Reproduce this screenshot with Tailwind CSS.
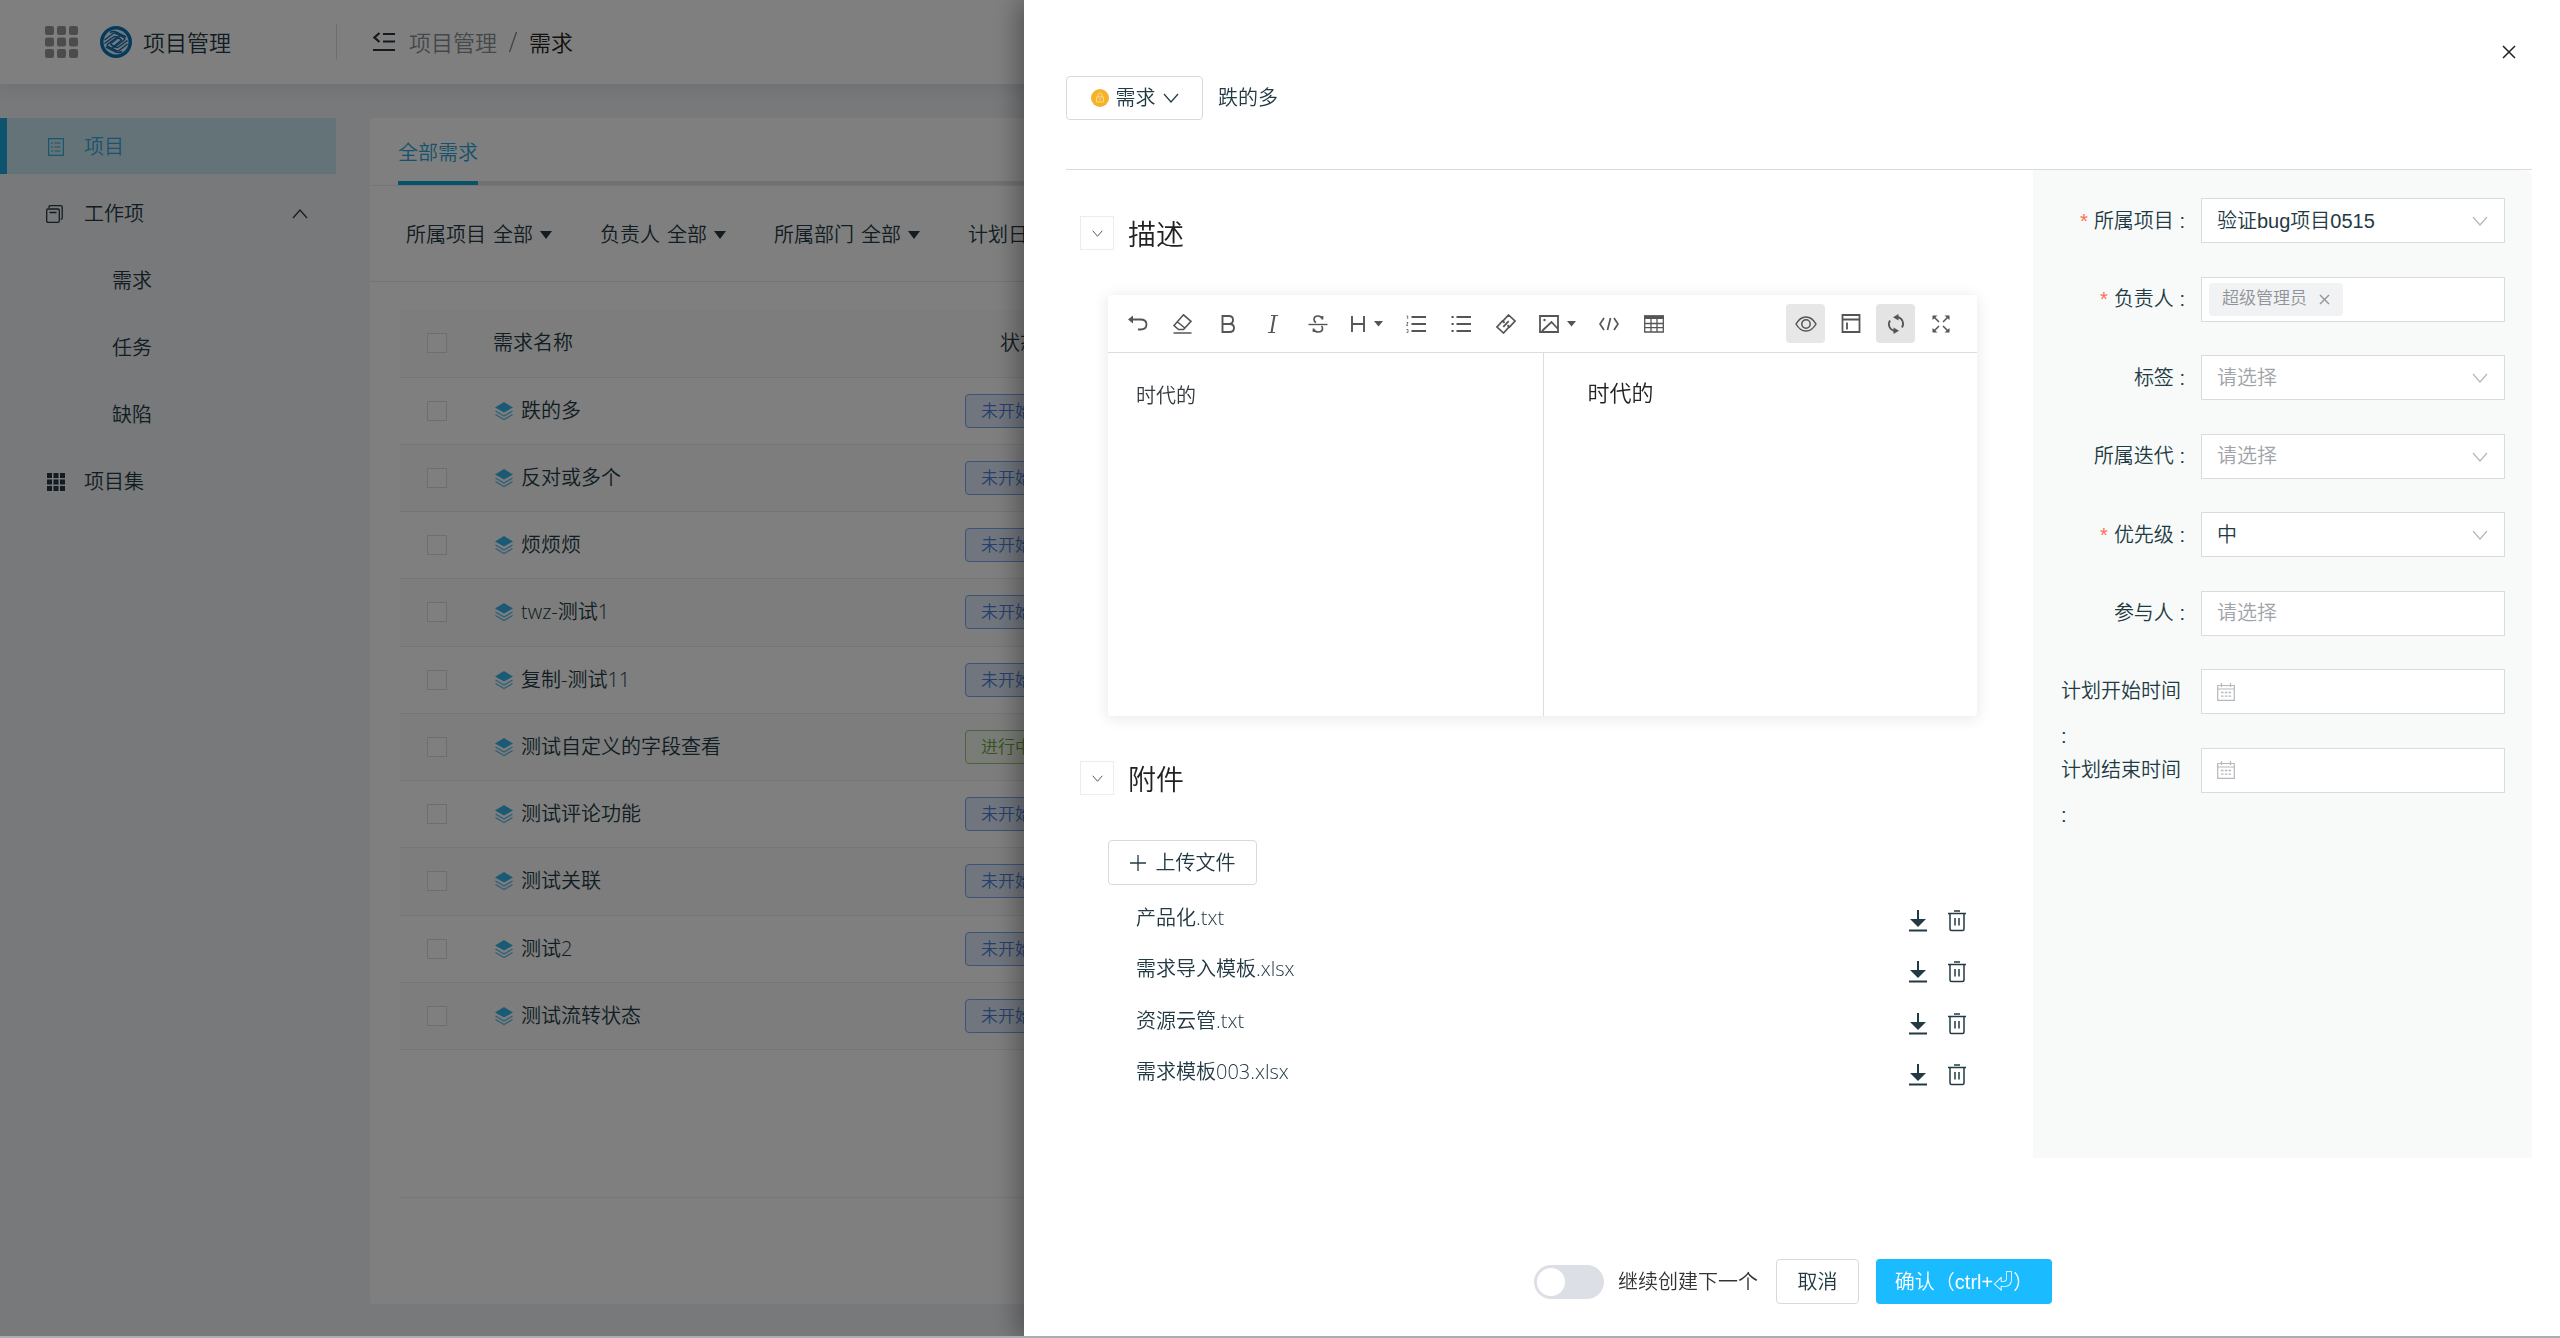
<!DOCTYPE html>
<html lang="zh-CN">
<head>
<meta charset="utf-8">
<meta name="viewport" content="width=device-width, initial-scale=1">
<title>项目管理 - 需求</title>
<script src="https://cdn.jsdelivr.net/npm/@tailwindcss/browser@4"></script>
</head>
<body class="bg-[#f0f2f5] font-['Open_Sans','Noto_Sans_CJK_SC',sans-serif] text-xl leading-7 font-[350] text-[#223a44]">

<svg class="hidden" aria-hidden="true">
  <symbol id="i-down" viewBox="0 0 16 16"><path d="M1 4l7 8 7-8" fill="none" stroke="currentColor" stroke-width="1.2"/></symbol>
  <symbol id="i-caret" viewBox="0 0 12 10"><path d="M0 1h12L6 9z" fill="currentColor"/></symbol>
  <symbol id="i-layers" viewBox="0 0 18 20"><path d="M9 1l9 5.500-9 5L0 6.500z" fill="#35b5ea"/><path d="M.5 10l8.500 5 8.500-5M.5 13.500l8.500 5 8.500-5" fill="none" stroke="#58bdea" stroke-width="1.300"/></symbol>
  <symbol id="i-download" viewBox="0 0 20 22"><path d="M10 0v10M1 20.500h18" stroke="currentColor" stroke-width="2" fill="none"/><path d="M2 9h16l-8 8z" fill="currentColor"/></symbol>
  <symbol id="i-trash" viewBox="0 0 20 22"><path d="M1 3.500h18M7 1h6M3 4v15q0 1.500 1.500 1.500h11q1.500 0 1.500-1.500V4M8 8v7.500M12 8v7.500" fill="none" stroke="currentColor" stroke-width="1.500"/></symbol>
  <symbol id="i-cal" viewBox="0 0 18 18"><path d="M.7 2.500h16.600v14.800H.7zM.7 6h16.600M4.500 0v4M13.500 0v4" fill="none" stroke="currentColor" stroke-width="1.200"/><path d="M4 9.500h2.500M7.800 9.500h2.500M11.500 9.500h2.500M4 13.200h2.500M7.800 13.200h2.500M11.500 13.200h2.500" stroke="currentColor" stroke-width="1.300"/></symbol>
</svg>

<div class="flex min-h-screen flex-col">
  <header class="relative flex h-21 items-center bg-white shadow-[0_4px_16px_rgba(0,21,41,0.08)]">
    <div class="flex w-84 items-center pl-[45px]">
      <svg class="h-8 w-[33px]" viewBox="0 0 33 32" fill="#999"><rect width="9" height="9" rx="2"/><rect x="12" width="9" height="9" rx="2"/><rect x="24" width="9" height="9" rx="2"/><rect y="11.500" width="9" height="9" rx="2"/><rect x="12" y="11.500" width="9" height="9" rx="2"/><rect x="24" y="11.500" width="9" height="9" rx="2"/><rect y="23" width="9" height="9" rx="2"/><rect x="12" y="23" width="9" height="9" rx="2"/><rect x="24" y="23" width="9" height="9" rx="2"/></svg>
      <svg class="ml-[22px] size-8" viewBox="0 0 32 32"><circle cx="16" cy="16" r="16" fill="#0b75b8"/><circle cx="16" cy="16" r="12.500" fill="#e4f0fa"/><g fill="none" stroke="#0f6fb4" stroke-width="1.500" stroke-linejoin="round"><path d="M4.500 14L13 7.500q1.500-1 3 0l8 4q1.500 1 0 2.500L14 21.500"/><path d="M4.500 17.500L13.500 11q1.500-1 3 0l4 2q1.500 1 0 2L12 22"/><path d="M10 6.500q3-1.500 6-.5l10 5"/><path d="M27.500 18L19 24.500q-1.500 1-3 0l-8-4q-1.500-1 0-2.500L18 10.500"/><path d="M27.500 14.500L18.500 21q-1.500 1-3 0l-4-2q-1.500-1 0-2L20 10"/><path d="M22 25.500q-3 1.500-6 .5l-10-5"/></g></svg>
      <h1 class="ml-[11px] text-[22px] font-[350]">项目管理</h1>
    </div>
    <div class="h-9 w-px bg-[#dcdcdc]"></div>
    <nav class="flex items-center pl-9 text-[22px]" aria-label="面包屑">
      <button type="button" aria-label="收起菜单"><svg class="h-5 w-[22px]" viewBox="0 0 22 20" fill="none" stroke="#28343c" stroke-width="2.200"><path d="M6.500 1L1.500 5.500l5 4.500M10 2h12M10 9.500h12M0 18h22"/></svg></button>
      <a href="#" class="ml-[14px] text-[#8a9196]">项目管理</a>
      <svg class="mx-3 h-5 w-2" viewBox="0 0 8 20"><path d="M7.500 0L.5 20" stroke="#8a9196" stroke-width="1.500"/></svg>
      <span class="text-[#222]">需求</span>
    </nav>
  </header>

  <div class="flex flex-1 pt-[34px] pb-[34px]">
    <aside class="w-84 shrink-0">
      <ul class="flex flex-col gap-[11px]">
        <li><a href="#" class="flex h-14 items-center border-l-[7px] border-[#1ba7dc] bg-[#c8e6f1] pt-[2px] pl-[41px] text-[#35a8de]">
          <svg class="h-[18px] w-4" viewBox="0 0 16 18" fill="none" stroke="currentColor" stroke-width="1.200"><path d="M.6.6h14.800v16.800H.6zM3 5h2M6.500 5h6M3 9h2M6.500 9h6M3 13h2M6.500 13h6"/></svg>
          <span class="ml-5">项目</span></a></li>
        <li><a href="#" class="flex h-14 items-center pt-[2px] pr-7 pl-[46px]">
          <svg class="h-[18px] w-[17px]" viewBox="0 0 17 18" fill="none" stroke="currentColor" stroke-width="1.300"><path d="M3 3V2q0-1.300 1.300-1.300h10.400Q16.200.7 16.200 2v11q0 1.300-1.500 1.300M2 4h10q1.300 0 1.300 1.300V16q0 1.300-1.300 1.300H2Q.7 17.300.7 16V5.300Q.7 4 2 4zM3.500 7.500h7"/></svg>
          <span class="ml-[21px]">工作项</span>
          <svg class="ml-auto size-4 rotate-180"><use href="#i-down"/></svg></a></li>
        <li><a href="#" class="flex h-14 items-center pt-[2px] pl-28">需求</a></li>
        <li><a href="#" class="flex h-14 items-center pt-[2px] pl-28">任务</a></li>
        <li><a href="#" class="flex h-14 items-center pt-[2px] pl-28">缺陷</a></li>
        <li><a href="#" class="flex h-14 items-center pt-[2px] pl-[47px]">
          <svg class="h-[18px] w-[18px]" viewBox="0 0 18 18" fill="currentColor"><path d="M0 0h5v5H0zM6.500 0h5v5h-5zM13 0h5v5h-5zM0 6.500h5v5H0zM6.500 6.500h5v5h-5zM13 6.500h5v5h-5zM0 13h5v5H0zM6.500 13h5v5h-5zM13 13h5v5h-5z"/></svg>
          <span class="ml-[19px]">项目集</span></a></li>
      </ul>
    </aside>

    <main class="mr-8 ml-[34px] flex-1 rounded bg-white">
      <div class="flex h-[68px] items-stretch border-b border-[#eaeaea] pl-7">
        <a href="#" class="flex items-center border-b-4 border-[#12a4d0] pt-[6px] text-[#2ba5d8]">全部需求</a>
        <div class="flex-1 border-b-4 border-[#e2e2e2]"></div>
      </div>
      <div class="flex h-24 items-center gap-12 border-b border-[#e8e8e8] pt-[2px] pl-9">
        <button type="button" class="flex shrink-0 items-center gap-[7px]"><span>所属项目</span><span>全部</span><svg class="h-[10px] w-3"><use href="#i-caret"/></svg></button>
        <button type="button" class="flex shrink-0 items-center gap-[7px]"><span>负责人</span><span>全部</span><svg class="h-[10px] w-3"><use href="#i-caret"/></svg></button>
        <button type="button" class="flex shrink-0 items-center gap-[7px]"><span>所属部门</span><span>全部</span><svg class="h-[10px] w-3"><use href="#i-caret"/></svg></button>
        <button type="button" class="flex shrink-0 items-center gap-[7px]"><span>计划日期</span><span>全部</span><svg class="h-[10px] w-3"><use href="#i-caret"/></svg></button>
      </div>
      <div class="mr-8 ml-[30px] mt-7 border-b border-[#f0f0f0] pb-[147px]">
        <table class="h-[740px] w-full table-fixed border-collapse text-left">
          <thead>
            <tr class="h-[67px] border-b border-[#ebebeb] bg-[#fafafa]">
              <th class="w-[65px] pl-[27px]"><input type="checkbox" aria-label="全选" class="block size-5 appearance-none border border-[#dcdcdc] bg-white"></th>
              <th class="w-[500px] pl-7 font-[350]">需求名称</th>
              <th class="pl-[35px] font-[350]">状态</th>
            </tr>
          </thead>
          <tbody id="rows"></tbody>
        </table>
      </div>
    </main>
  </div>
</div>

<div class="fixed inset-0 bg-black/50"></div>

<section role="dialog" aria-label="创建需求" class="fixed inset-y-0 right-0 flex w-3/5 flex-col bg-white pr-7 pl-[42px] shadow-[-6px_0_24px_rgba(0,0,0,0.35)]">
  <button type="button" aria-label="关闭" class="absolute top-[44px] right-[43px] size-4 text-[#222]"><svg class="size-4" viewBox="0 0 16 16"><path d="M2 2l12 12M14 2L2 14" stroke="currentColor" stroke-width="1.500"/></svg></button>

  <div class="flex items-center border-b border-[#d9dcdd] pt-19 pb-[49px]">
    <button type="button" class="flex h-11 w-[137px] items-center justify-center gap-[7px] rounded border border-[#d9d9d9]">
      <svg class="size-[18px]" viewBox="0 0 18 18"><circle cx="9" cy="9" r="9" fill="#f5b32c"/><path d="M5.500 13V8h7v5zM7 8V6q0-2 2-2t2 2v2M9 9.500v2" fill="none" stroke="#fbd98c" stroke-width="1"/></svg>
      需求<svg class="size-4"><use href="#i-down"/></svg>
    </button>
    <span class="ml-[15px]">跌的多</span>
  </div>

  <div class="flex flex-1">
    <div class="flex-1 pt-[45px] pr-14 pl-[14px]">
      <div class="flex items-center gap-[14px]">
        <button type="button" aria-label="折叠描述" class="flex size-[34px] items-center justify-center border border-[#ececec]"><svg class="size-[11px]"><use href="#i-down"/></svg></button>
        <h2 class="pt-[2px] text-[28px] leading-[34px] font-[350] text-[#222]">描述</h2>
      </div>

      <div class="mt-11 ml-7 rounded shadow-[0_2px_14px_2px_rgba(0,0,0,0.08)]">
        <div class="flex h-[58px] items-center gap-[6px] border-b border-[#ddd] pr-[17px] pl-[10px] text-[#555]">
          <button type="button" aria-label="撤销" class="flex h-10 w-[39px] items-center justify-center"><svg class="size-5" viewBox="0 0 20 20"><path d="M2 5.500h10.500q6 0 6 5t-6 5H10" fill="none" stroke="currentColor" stroke-width="1.800"/><path d="M0 5.500L5 1.500v8z" fill="currentColor"/></svg></button>
          <button type="button" aria-label="清除" class="flex h-10 w-[39px] items-center justify-center"><svg class="size-5" viewBox="0 0 20 20"><path d="M.5 19h18M5.500 15.500L1 11.500 10.500.8l7.500 6.500L10.500 15.500zM4.500 8l8 6.500" fill="none" stroke="currentColor" stroke-width="1.600"/></svg></button>
          <button type="button" aria-label="粗体" class="flex h-10 w-[39px] items-center justify-center"><svg class="size-5" viewBox="0 0 20 20"><path d="M4.500 2h6.500q4 0 4 4t-4 4H4.500zM4.500 10h7q4.500 0 4.500 4t-4.500 4h-7z" fill="none" stroke="currentColor" stroke-width="1.900"/></svg></button>
          <button type="button" aria-label="斜体" class="flex h-10 w-[39px] items-center justify-center"><svg class="size-5" viewBox="0 0 20 20"><path d="M8 1.500h7M5 18.500h7" stroke="currentColor" stroke-width="1.200"/><path d="M11.500 1.500l-3 17" stroke="currentColor" stroke-width="2"/></svg></button>
          <button type="button" aria-label="删除线" class="flex h-10 w-[39px] items-center justify-center"><svg class="size-5" viewBox="0 0 20 20" fill="none" stroke="currentColor"><path d="M.5 10.500h19" stroke-width="1.400"/><path d="M14.500 5.500V2M14.500 5q-1.500-3-4.500-3-4 0-4 3.500 0 2 2 3M5.500 14.500V18M5.500 15q1.500 3 4.500 3 4.500 0 4.500-3.500 0-1.500-1-2.500" stroke-width="1.700"/></svg></button>
          <button type="button" aria-label="标题" class="flex h-10 w-[47px] items-center justify-center gap-2"><svg class="h-5 w-4" viewBox="0 0 16 20"><path d="M2 2v16M14 2v16M2 10h12" stroke="currentColor" stroke-width="1.900"/></svg><svg class="h-[6px] w-[9px]" viewBox="0 0 9 6"><path d="M0 0h9L4.500 5.500z" fill="currentColor"/></svg></button>
          <button type="button" aria-label="有序列表" class="flex h-10 w-[39px] items-center justify-center"><svg class="size-5" viewBox="0 0 20 20"><path d="M5.500 3H20M5.500 10H20M5.500 17H20" stroke="currentColor" stroke-width="1.900"/><path d="M.5 2h1.200v3M.5 8.500h1.500L.5 11.500H2M.5 15.500h1.500v3H.5" fill="none" stroke="currentColor" stroke-width=".8"/></svg></button>
          <button type="button" aria-label="无序列表" class="flex h-10 w-[39px] items-center justify-center"><svg class="size-5" viewBox="0 0 20 20"><path d="M5.500 3H20M5.500 10H20M5.500 17H20M.5 3h2.200M.5 10h2.200M.5 17h2.200" stroke="currentColor" stroke-width="1.900"/></svg></button>
          <button type="button" aria-label="链接" class="flex h-10 w-[39px] items-center justify-center"><svg class="size-5" viewBox="0 0 20 20"><path d="M8.500 8.500L7 7l5.500-6L19 7l-5.500 6-2-1.800M11.500 11.500L13 13l-5.500 6L1 13l5.500-6 2 1.800M7.300 12.800l5.400-5.600" fill="none" stroke="currentColor" stroke-width="1.700"/></svg></button>
          <button type="button" aria-label="图片" class="flex h-10 w-[52px] items-center justify-center gap-2"><svg class="h-[18px] w-5" viewBox="0 0 20 18"><path d="M1 1h18v16H1zM3 16l9.500-9 6.500 7" fill="none" stroke="currentColor" stroke-width="1.800"/><circle cx="5.500" cy="5" r="1.200" fill="currentColor"/></svg><svg class="h-[6px] w-[9px]" viewBox="0 0 9 6"><path d="M0 0h9L4.500 5.500z" fill="currentColor"/></svg></button>
          <button type="button" aria-label="代码" class="flex h-10 w-[39px] items-center justify-center"><svg class="size-5" viewBox="0 0 20 20"><path d="M5 4L1 10l4 6M15 4l4 6-4 6M11.500 4l-3 12" fill="none" stroke="currentColor" stroke-width="1.700"/></svg></button>
          <button type="button" aria-label="表格" class="flex h-10 w-[39px] items-center justify-center"><svg class="size-5" viewBox="0 0 20 20"><path d="M.7 2h18.600v16H.7zM.7 9.500h18.600M.7 13.700h18.600M7 5v13M13 5v13" fill="none" stroke="currentColor" stroke-width="1.300"/><path d="M0 1.500h20V5H0z" fill="currentColor"/></svg></button>
          <div class="flex-1"></div>
          <button type="button" aria-label="预览" class="flex h-[39px] w-[39px] items-center justify-center rounded bg-[#e7e7e7]"><svg class="h-4 w-[22px]" viewBox="0 0 22 16" fill="none" stroke="currentColor" stroke-width="1.500"><path d="M1 8q4-7 10-7t10 7q-4 7-10 7T1 8z"/><circle cx="11" cy="8" r="4.200"/></svg></button>
          <button type="button" aria-label="目录" class="flex h-[39px] w-[39px] items-center justify-center"><svg class="h-[19px] w-5" viewBox="0 0 20 19" fill="none" stroke="currentColor" stroke-width="1.800"><path d="M1.500 1h17v17h-17zM1.500 5.500h17M6 8.500v7"/></svg></button>
          <button type="button" aria-label="同步滚动" class="flex h-[39px] w-[39px] items-center justify-center rounded bg-[#e4e4e4]"><svg class="size-5" viewBox="0 0 20 20"><path d="M9 17q-4-.5-5.500-4T4 6.500M11 3q4 .5 5.500 4T16 13.500" fill="none" stroke="currentColor" stroke-width="1.800"/><path d="M12.500 0v6.500L7 3.200zM7.500 20v-6.500l5.500 3.300z" fill="currentColor"/></svg></button>
          <button type="button" aria-label="全屏" class="flex h-[39px] w-[39px] items-center justify-center"><svg class="size-[18px]" viewBox="0 0 18 18"><path d="M2 2l5 5M16 2l-5 5M2 16l5-5M16 16l-5-5" stroke="currentColor" stroke-width="1.500"/><path d="M.5.5H5.500l-5 4.500zM17.500.5H12.500l5 4.500zM.5 17.500H5.500l-5-4.500zM17.500 17.500H12.500l5-4.500z" fill="currentColor"/></svg></button>
        </div>
        <div class="grid h-[363px] grid-cols-2">
          <textarea aria-label="描述内容" class="resize-none py-[29px] pl-7 text-xl leading-7 text-[#333b40] outline-none">时代的</textarea>
          <div class="border-l border-[#ddd] pt-[25px] pl-11 text-[22px] text-[#222]">时代的</div>
        </div>
      </div>

      <div class="mt-11 flex items-center gap-[14px]">
        <button type="button" aria-label="折叠附件" class="flex size-[34px] items-center justify-center border border-[#ececec]"><svg class="size-[11px]"><use href="#i-down"/></svg></button>
        <h2 class="pt-[2px] text-[28px] leading-[34px] font-[350] text-[#222]">附件</h2>
      </div>
      <button type="button" class="mt-11 ml-7 flex h-[45px] w-[149px] items-center justify-center gap-[10px] rounded border border-[#d9d9d9]"><svg class="size-4" viewBox="0 0 16 16"><path d="M8 0v16M0 8h16" stroke="currentColor" stroke-width="1.300"/></svg>上传文件</button>
      <ul id="files" class="mt-[7px] grid h-[206px] grid-rows-4 pr-[10px] pl-14"></ul>
    </div>

    <form class="w-[499px] shrink-0 rounded-tr-lg bg-[#f8faf9] pt-7 pr-[27px] pl-7 font-['Liberation_Sans','Noto_Sans_CJK_SC',sans-serif]">
      <div class="flex h-[595px] flex-col justify-between">
        <div class="flex h-[45px] items-center">
          <label for="f1" class="flex flex-1 items-center justify-end gap-[6px] pr-4"><span class="text-[#ff6a55]">*</span><span>所属项目 :</span></label>
          <div class="relative w-[304px]"><select id="f1" class="h-[45px] w-full appearance-none border border-[#d9dcdd] bg-white px-[15px] outline-none"><option>验证bug项目0515</option></select><svg class="pointer-events-none absolute top-[15px] right-[17px] size-4 text-[#b4b8bd]"><use href="#i-down"/></svg></div>
        </div>
        <div class="flex h-[45px] items-center">
          <label for="f2" class="flex flex-1 items-center justify-end gap-[6px] pr-4"><span class="text-[#ff6a55]">*</span><span>负责人 :</span></label>
          <div class="flex h-[45px] w-[304px] items-center border border-[#d9dcdd] bg-white pl-[7px]">
            <span class="flex h-[33px] w-[134px] items-center justify-center gap-3 rounded bg-[#f0f2f4] text-[17px] text-[#909399]">超级管理员<button type="button" aria-label="移除"><svg class="size-[11px]" viewBox="0 0 11 11"><path d="M1 1l9 9M10 1l-9 9" stroke="currentColor" stroke-width="1.400"/></svg></button></span>
            <input id="f2" class="min-w-0 flex-1 outline-none">
          </div>
        </div>
        <div class="flex h-[45px] items-center">
          <label for="f3" class="flex-1 pr-4 text-right">标签 :</label>
          <div class="relative w-[304px]"><select id="f3" class="h-[45px] w-full appearance-none border border-[#d9dcdd] bg-white px-[15px] text-[#a0a4a9] outline-none"><option>请选择</option></select><svg class="pointer-events-none absolute top-[15px] right-[17px] size-4 text-[#b4b8bd]"><use href="#i-down"/></svg></div>
        </div>
        <div class="flex h-[45px] items-center">
          <label for="f4" class="flex-1 pr-4 text-right">所属迭代 :</label>
          <div class="relative w-[304px]"><select id="f4" class="h-[45px] w-full appearance-none border border-[#d9dcdd] bg-white px-[15px] text-[#a0a4a9] outline-none"><option>请选择</option></select><svg class="pointer-events-none absolute top-[15px] right-[17px] size-4 text-[#b4b8bd]"><use href="#i-down"/></svg></div>
        </div>
        <div class="flex h-[45px] items-center">
          <label for="f5" class="flex flex-1 items-center justify-end gap-[6px] pr-4"><span class="text-[#ff6a55]">*</span><span>优先级 :</span></label>
          <div class="relative w-[304px]"><select id="f5" class="h-[45px] w-full appearance-none border border-[#d9dcdd] bg-white px-[15px] outline-none"><option>中</option></select><svg class="pointer-events-none absolute top-[15px] right-[17px] size-4 text-[#b4b8bd]"><use href="#i-down"/></svg></div>
        </div>
        <div class="flex h-[45px] items-center">
          <label for="f6" class="flex-1 pr-4 text-right">参与人 :</label>
          <input id="f6" placeholder="请选择" class="h-[45px] w-[304px] border border-[#d9dcdd] bg-white px-[15px] outline-none placeholder:text-[#a0a4a9]">
        </div>
        <div class="flex h-[45px] items-start">
          <label for="f7" class="flex-1 pr-4 leading-[45px]">计划开始时间 :</label>
          <div class="flex h-[45px] w-[304px] items-center border border-[#d9dcdd] bg-white pl-[15px]"><svg class="size-[18px] text-[#b4b8bd]"><use href="#i-cal"/></svg><input id="f7" class="min-w-0 flex-1 px-2 outline-none"></div>
        </div>
        <div class="flex h-[45px] items-start">
          <label for="f8" class="flex-1 pr-4 leading-[45px]">计划结束时间 :</label>
          <div class="flex h-[45px] w-[304px] items-center border border-[#d9dcdd] bg-white pl-[15px]"><svg class="size-[18px] text-[#b4b8bd]"><use href="#i-cal"/></svg><input id="f8" class="min-w-0 flex-1 px-2 outline-none"></div>
        </div>
      </div>
    </form>
  </div>

  <footer class="flex items-center justify-center pt-[101px] pr-3 pb-[34px] font-['Liberation_Sans','Noto_Sans_CJK_SC',sans-serif]">
    <label class="flex items-center gap-[14px] text-[#333]">
      <input type="checkbox" role="switch" class="h-[34px] w-[70px] appearance-none rounded-full bg-[#dcdfe6] before:m-[3px] before:block before:size-7 before:rounded-full before:bg-white">
      继续创建下一个
    </label>
    <button type="button" class="ml-[18px] h-[45px] w-[83px] rounded border border-[#d9d9d9]">取消</button>
    <button type="button" class="ml-[17px] h-[45px] w-44 rounded bg-[#1abbff] text-white">确认（ctrl+⏎）</button>
  </footer>
</section>

<div class="fixed inset-x-0 bottom-0 h-[2px] bg-[#a9afb0]"></div>

<script>
  const tags = {
    '未开始': 'border-[#7aa7ee] bg-[#e2ebfa] text-[#4a80dc]',
    '进行中': 'border-[#9bc77a] bg-[#f3f8ee] text-[#6aa83c]'
  };
  const items = [['跌的多'], ['反对或多个'], ['烦烦烦'], ['twz-测试1'], ['复制-测试11'], ['测试自定义的字段查看', '进行中'], ['测试评论功能'], ['测试关联'], ['测试2'], ['测试流转状态']];
  document.getElementById('rows').innerHTML = items.map(([name, status = '未开始']) => `
    <tr class="h-[67px] border-b border-[#ebebeb] even:bg-[#fafafa]">
      <td class="pl-[27px]"><input type="checkbox" aria-label="${name}" class="block size-5 appearance-none border border-[#dcdcdc] bg-white"></td>
      <td class="pl-[30px]"><a href="#" class="flex items-center gap-2"><svg class="h-5 w-[18px]"><use href="#i-layers"/></svg>${name}</a></td>
      <td><span class="flex h-[34px] w-28 items-center rounded border px-[15px] text-[17px] ${tags[status]}">${status}</span></td>
    </tr>`).join('');
  document.getElementById('files').innerHTML = ['产品化.txt', '需求导入模板.xlsx', '资源云管.txt', '需求模板003.xlsx'].map(f => `
    <li class="flex items-center"><a href="#">${f}</a>
      <div class="ml-auto flex items-center gap-[19px] pt-[6px]">
        <button type="button" aria-label="下载"><svg class="block h-[22px] w-5"><use href="#i-download"/></svg></button>
        <button type="button" aria-label="删除"><svg class="block h-[22px] w-5"><use href="#i-trash"/></svg></button>
      </div></li>`).join('');
</script>
</body>
</html>
